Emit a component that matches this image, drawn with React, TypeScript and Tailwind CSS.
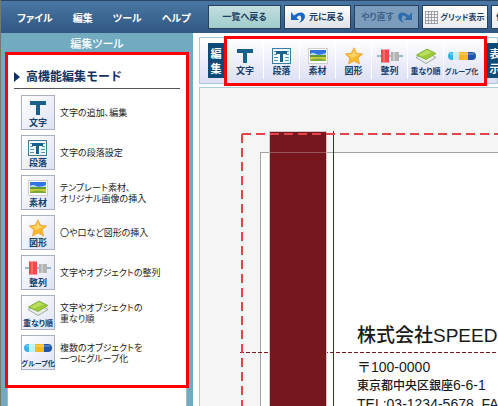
import type { ReactNode } from 'react';
import clsx from 'clsx';

interface Tool {
  id: string;
  label: string;
  icon: ReactNode;
  description: string[];
  small?: 'sm' | 'xs';
}

function TextIcon() {
  return (
    <svg viewBox="0 0 22 16" className="w-[22px] h-4">
      <path d="M3 1h16v4H13v10H9V5H3z" fill="#17618b" />
    </svg>
  );
}

function ParagraphIcon() {
  return (
    <svg viewBox="0 0 22 16" className="w-[22px] h-4">
      <rect x="1.5" y=".5" width="18" height="15" fill="#f4fafd" stroke="#3d7c9e" />
      <path d="M3 3.5h15M3 6.5h3M15 6.5h3M3 9.5h4M14 9.5h4M3 12.5h4M14 12.5h4" stroke="#4f93b5" />
      <path d="M5 3h11v3h-4v8H9V6H5z" fill="#17618b" />
    </svg>
  );
}

function PhotoIcon() {
  return (
    <svg viewBox="0 0 22 16" className="w-[22px] h-4">
      <rect x="1.5" y=".5" width="19" height="15" fill="#fff" stroke="#cfcfd2" />
      <rect x="3" y="2" width="16" height="5" fill="#2f74e0" />
      <path d="M3 6q3-2 6 0t10-1v2H3z" fill="#b9dcf0" />
      <rect x="3" y="7" width="16" height="2" fill="#5f9a3c" />
      <rect x="3" y="9" width="16" height="4" fill="#c9cc3a" />
      <path d="M3 12q8-3 16 0v1H3z" fill="#7da83a" />
    </svg>
  );
}

function StarIcon() {
  return (
    <svg viewBox="0 0 22 18" className="w-[22px] h-[18px]">
      <path
        d="M11 .8l2.6 5.4 6 .7-4.4 4 1.3 6-5.5-2.9L5.6 17l1.1-6.1-4.4-4 6-.7z"
        fill="#fbb829"
        stroke="#e9a23b"
        strokeWidth=".8"
        strokeLinejoin="round"
      />
      <path d="M11 3l1.7 4.2 3.8.5-7.5 3.3-4-3.3 4.2-.6z" fill="#fdd56a" />
    </svg>
  );
}

function AlignIcon() {
  return (
    <svg viewBox="0 0 26 14" className="w-[26px] h-3.5">
      <path d="M0 7h26" stroke="#3c7f9f" />
      <rect x="4" y=".5" width="8" height="13" fill="#f4474b" />
      <path d="M7 .5v13" stroke="#ff8d8d" />
      <rect x="14" y="3" width="8" height="9" fill="#b4b4b4" />
      <path d="M17 3v9" stroke="#dedede" />
    </svg>
  );
}

function LayersIcon() {
  return (
    <svg viewBox="0 0 22 16" className="w-[22px] h-4">
      <path d="M11 4l10 5.5-10 6-10-6z" fill="#e9eee9" stroke="#8b998b" strokeWidth=".8" />
      <path d="M12 1l9 4.5-10 6-9.5-4.5z" fill="#9ccb35" stroke="#79a83a" strokeWidth=".8" />
      <path d="M12 2l5 2.5-10 4-3.5-1.7z" fill="#b9de5e" />
    </svg>
  );
}

function GroupIcon() {
  return (
    <svg viewBox="0 0 28 8" className="w-7 h-2">
      <rect width="14" height="8" rx="4" fill="#2fb5ec" />
      <rect x="14" width="14" height="8" rx="4" fill="#1f55a8" />
      <rect x="5" width="6" height="8" fill="#c4ecfa" />
      <rect x="11" width="9" height="8" fill="#f6b81c" />
      <path d="M2 2h24" stroke="#fff" strokeOpacity=".45" />
    </svg>
  );
}

const TOOLS: Tool[] = [
  { id: 'text', label: '文字', icon: <TextIcon />, description: ['文字の追加、編集'] },
  { id: 'paragraph', label: '段落', icon: <ParagraphIcon />, description: ['文字の段落設定'] },
  { id: 'photo', label: '素材', icon: <PhotoIcon />, description: ['テンプレート素材、', 'オリジナル画像の挿入'] },
  { id: 'shape', label: '図形', icon: <StarIcon />, description: ['〇や口など図形の挿入'] },
  { id: 'align', label: '整列', icon: <AlignIcon />, description: ['文字やオブジェクトの整列'] },
  { id: 'order', label: '重なり順', icon: <LayersIcon />, description: ['文字やオブジェクトの', '重なり順'], small: 'sm' },
  { id: 'group', label: 'グループ化', icon: <GroupIcon />, description: ['複数のオブジェクトを', '一つにグループ化'], small: 'xs' },
];

const MENUS = ['ファイル', '編集', 'ツール', 'ヘルプ'];

function ToolButton({ tool, className }: { tool: Tool; className: string }) {
  return (
    <button
      className={clsx(
        'shrink-0 flex flex-col items-center justify-end font-bold text-[#14406e] whitespace-nowrap',
        className,
      )}
    >
      <span className="h-[18px] flex items-center">{tool.icon}</span>
      <span
        className={clsx(
          'leading-3',
          !tool.small && 'text-[9px]',
          tool.small === 'sm' && 'text-[8px]',
          tool.small === 'xs' && 'text-[7px]',
        )}
      >
        {tool.label}
      </span>
    </button>
  );
}

function Header() {
  const button =
    'h-6 shrink-0 flex items-center border border-[#27415c] font-bold text-[#1d3f63] whitespace-nowrap';

  return (
    <header className="h-[33px] shrink-0 flex items-center border-t border-[#2c4765] bg-gradient-to-b from-[#4977a3] to-[#315783] overflow-hidden">
      <nav className="w-[207px] shrink-0 flex gap-5 pl-4 text-[10px] font-bold text-white">
        {MENUS.map(m => (
          <button key={m}>{m}</button>
        ))}
      </nav>
      <div className="flex gap-[3px]">
        <button className={clsx(button, 'w-[73px] justify-center text-[9px] bg-gradient-to-b from-[#c2dedf] to-[#a0cccb]')}>
          一覧へ戻る
        </button>
        <button className={clsx(button, 'w-[67px] justify-center gap-1 text-[9px] bg-gradient-to-b from-white to-[#dfe1e8]')}>
          <svg viewBox="0 0 14 12" className="w-3.5 h-3 shrink-0">
            <path d="M0 1v8h8L5.500 6.500Q9 3 10 6t-2 6q6-2 6-7Q13 0 7 2L3 4.500z" fill="#1767c4" />
          </svg>
          元に戻る
        </button>
        <button className={clsx(button, 'w-[65px] justify-center gap-1 text-[9px] bg-[#7c9cbd] text-[#3d638a]')}>
          やり直す
          <svg viewBox="0 0 14 12" className="w-3.5 h-3 shrink-0">
            <path d="M14 1v8H6l2.500-2.500Q5 3 4 6t2 6Q0 10 0 5q1-5 7-3l4 2.500z" fill="#2f6cae" />
          </svg>
        </button>
        <button className={clsx(button, 'w-[66px] justify-center gap-0.5 text-[8px] bg-gradient-to-b from-white to-[#e9eaf0]')}>
          <svg viewBox="0 0 13 13" className="w-[13px] h-[13px] shrink-0">
            <path
              d="M.5 0v13M3.500 0v13M6.500 0v13M9.500 0v13M12.500 0v13M0 .5h13M0 3.500h13M0 6.500h13M0 9.500h13M0 12.500h13"
              stroke="#8d9096"
              strokeWidth=".8"
            />
          </svg>
          グリッド表示
        </button>
        <button className={clsx(button, 'w-[66px] pl-1 text-[9px] bg-gradient-to-b from-white to-[#e9eaf0]')}>位置調整</button>
      </div>
    </header>
  );
}

function Sidebar() {
  return (
    <aside className="w-[192px] shrink-0 flex flex-col bg-[#72aabf] px-1">
      <h2 className="h-[19px] shrink-0 text-center text-[11px] leading-5 font-medium text-white">編集ツール</h2>
      <section className="h-[336px] shrink-0 bg-white border-[3px] border-[#ff0000] px-1.5">
        <h3 className="h-[34px] flex items-end gap-1.5 border-b border-[#555] pb-1 text-[12px] leading-4 font-bold text-[#14305c] [font-feature-settings:normal]">
          <svg viewBox="0 0 6 10" className="w-1.5 h-2.5 mb-0.5">
            <path d="M0 0l6 5-6 5z" fill="#0d2f6b" />
          </svg>
          高機能編集モード
        </h3>
        <ul className="flex flex-col gap-[5px] pt-1.5 pl-[7px]">
          {TOOLS.map(tool => (
            <li key={tool.id} className="flex items-center gap-[5px]">
              <ToolButton
                tool={tool}
                className="w-[34px] h-[35px] border border-[#aab0bf] bg-gradient-to-br from-white to-[#dfe3f4]"
              />
              <p className="text-[9px] leading-[11px] text-[#222] whitespace-nowrap">
                {tool.description.map(line => (
                  <span key={line} className="block">{line}</span>
                ))}
              </p>
            </li>
          ))}
        </ul>
      </section>
      <div className="flex-1 mx-0.5 bg-white border-x border-[#a5b9c0]" />
    </aside>
  );
}

function Tab({ children }: { children: ReactNode }) {
  return (
    <div className="w-4 h-[35px] shrink-0 flex items-center justify-center bg-[#0e4a78] text-center text-[11px] leading-[15px] font-bold text-white">
      {children}
    </div>
  );
}

function Toolbar() {
  return (
    <div className="h-[47px] shrink-0 flex items-center border border-[#abcbd6] bg-gradient-to-b from-white to-[#dcdff5] pl-2">
      <Tab>編<br />集</Tab>
      <div className="h-[50px] shrink-0 flex items-center border-[3px] border-[#ff0000] pr-[5px]">
        {TOOLS.map((tool, i) => (
          <ToolButton
            key={tool.id}
            tool={tool}
            className={clsx('w-9 h-9 pb-0.5', i > 0 && 'border-l border-white')}
          />
        ))}
      </div>
      <Tab>表<br />示</Tab>
    </div>
  );
}

function Canvas() {
  return (
    <main className="relative flex-1 overflow-hidden border-l border-t border-[#abcbd6] bg-[#f5f5f5]">
      <svg className="absolute inset-0 w-full h-full">
        <rect x="60.5" y="64.5" width="900" height="540" fill="#fff" stroke="#a3a3a3" />
        <path d="M40 264.500h900" stroke="#7b1820" strokeDasharray="4 2" />
        <rect x="69.500" y="43.500" width="57" height="600" fill="#75171c" stroke="#d9c4c5" />
        <path d="M70 64.500h56" stroke="#96555a" />
        <path d="M133.500 43v600" stroke="#75171c" />
        <path d="M42 46h900" stroke="#e5434a" strokeWidth="2" strokeDasharray="9 5" />
        <path d="M42 46v600" stroke="#e5434a" strokeWidth="2" strokeDasharray="9 5" />
      </svg>
      <div className="absolute left-[157px] top-[234px] whitespace-nowrap text-[14px] leading-[18px] text-[#1a1a1a] font-['Liberation_Sans','Noto_Sans_CJK_JP',sans-serif] [font-feature-settings:normal]">
        <p className="text-[19px] leading-7 font-medium">株式会社SPEED.</p>
        <p className="pt-2">〒100-0000</p>
        <p><span className="text-[12px] font-medium">東京都中央区銀座</span>6-6-1</p>
        <p>TEL:03-1234-5678&nbsp; FAX</p>
      </div>
    </main>
  );
}

export default function App() {
  return (
    <div
      lang="ja"
      className="h-screen flex flex-col overflow-hidden bg-white border-l border-[#77776c] font-['Noto_Sans_CJK_JP',sans-serif] [font-feature-settings:'palt']"
    >
      <Header />
      <div className="flex-1 min-h-0 flex">
        <Sidebar />
        <div className="flex-1 min-w-0 flex flex-col gap-[3px] pl-1.5 pt-1 overflow-hidden">
          <Toolbar />
          <Canvas />
        </div>
      </div>
    </div>
  );
}
